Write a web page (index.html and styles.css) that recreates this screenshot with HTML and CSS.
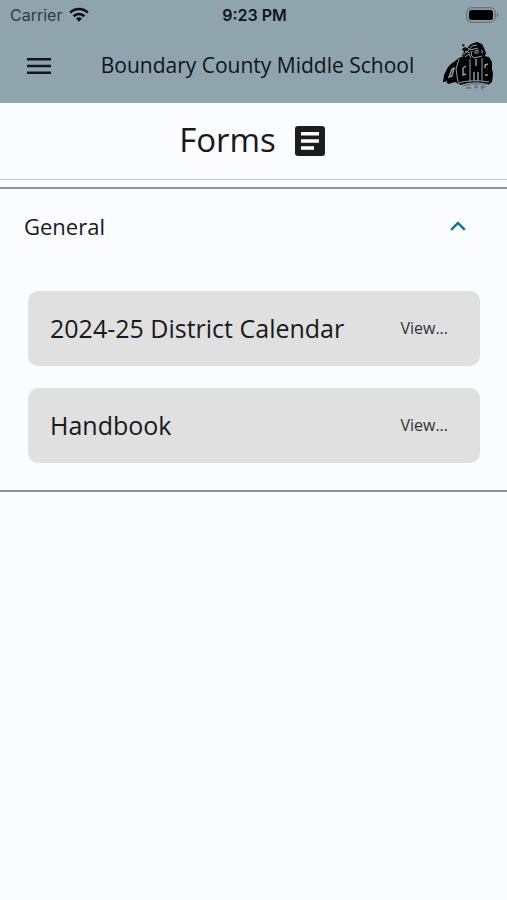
FILE: index.html
```
<!DOCTYPE html>
<html lang="en">
<head>
  <meta charset="UTF-8">
  <meta name="viewport" content="width=device-width, initial-scale=1.0">
  <title>Forms - Boundary County Middle School</title>
  <link rel="stylesheet" href="styles.css">
</head>
<body>
  <header>
    <div class="status-bar">
      <div class="carrier">
        <span>Carrier</span>
        <svg width="20" height="15" viewBox="0 0 20 15" fill="none" stroke="#0b1013" stroke-width="2.7">
          <path d="M1.2 5.6a12.6 12.6 0 0 1 17.6 0" />
          <path d="M4.6 9.2a7.7 7.7 0 0 1 10.8 0" />
          <path d="M10 14.8l-3-3.2a4.3 4.3 0 0 1 6 0z" fill="#0b1013" stroke="none" />
        </svg>
      </div>
      <span class="time">9:23 PM</span>
      <div class="battery">
        <svg width="33" height="16" viewBox="0 0 33 16">
          <rect x="0.8" y="0.8" width="28.4" height="14.4" rx="4.5" fill="none" stroke="#59676f" />
          <rect x="3" y="3" width="24" height="10" rx="2.5" fill="#000" />
          <path d="M31 5.6c1.8.8 1.8 4 0 4.8z" fill="#59676f" />
        </svg>
      </div>
    </div>

    <div class="app-bar">
      <button class="menu" type="button" aria-label="Menu">
        <svg width="26" height="18" viewBox="0 0 26 18" fill="#101619">
          <path d="M1 1h24v2.4H1zM1 7.8h24v2.4H1zM1 14.6h24V17H1z" />
        </svg>
      </button>
      <h1>Boundary County Middle School</h1>
      <svg class="logo" width="52" height="50" viewBox="0 0 52 50" role="img" aria-label="School logo">
        <!-- badger: body, then head and cap -->
        <path d="M2 41l1-7 4-8 3-3 8-6 5-2 5 1 7 2 8-3 5 1 3 5v7l1 5-1 8-4 3-9-1-9-1-9 2-6-3-7 2-2-3-2 1z" fill="#000" />
        <path d="M23 17l-2-3 2-3-2-3 3-2 2 1 4-4 6-2 5 2 2 4 2 5-2 6-6 2-8-1z" fill="#000" />
        <path d="M21 3l3 1-2 2z" fill="#000" />
        <g fill="none" stroke="#90a4ae" stroke-width="1">
          <path d="M22 14l5-4 4-5 5-1M24 10l5 2M26 6l3 3 8-2M24 16l4-3 2 4M31 10l-1 4 3 3 8-2" />
          <path d="M34 10l3-1v3h-3zM40 9l2 2-2 1" />
          <path d="M18 18l-3 10 2 13M29 18v23M41 17v23M17 42q14-4 31-1" />
          <path d="M11 28l-3 8 3-1 2-8zM25 25l-3 2v7l3-1M35 18v7M33 40v-9M37 40v-9M47 23l-3 1v3M44 34h3" stroke-width="1.4" />
        </g>
        <path d="M20 44q12-5 27-1l-2 4q-11-4-20 0z" fill="#90a4ae" />
        <path d="M22 45q10-4 23-1M25 47h6M33 46h4M39 46h6M28 44l-2 4M35 43v5M42 44l-1 5" fill="none" stroke="#52616a" stroke-width=".8" />
      </svg>
    </div>
  </header>

  <main>
    <div class="page-title">
      <h2>Forms</h2>
      <svg width="32" height="32" viewBox="0 0 32 32">
        <rect x="1" y="1" width="30" height="30" rx="3" fill="#1d1d1f" />
        <path d="M7 7h18v3.6H7zM7 14.2h18v3.6H7zM7 21.2h13v3.6H7z" fill="#fff" />
      </svg>
    </div>

    <details class="section" open>
      <summary>
        <span>General</span>
        <svg class="chevron" width="16" height="10" viewBox="0 0 16 10" fill="none" stroke="#14708a" stroke-width="2.4">
          <path d="M1.2 8.8L8 2l6.800 6.800" />
        </svg>
      </summary>
      <div class="forms">
        <a class="form-card" href="#calendar">
          <span class="name">2024-25 District Calendar</span>
          <span class="view">View...</span>
        </a>
        <a class="form-card" href="#handbook">
          <span class="name">Handbook</span>
          <span class="view">View...</span>
        </a>
      </div>
    </details>
  </main>
</body>
</html>
```
FILE: styles.css
```
* { box-sizing: border-box; }
body { margin: 0; font-family: "Open Sans", sans-serif; background: #fbfcff; color: #18191b; }
h1, h2 { margin: 0; font-weight: 400; }
svg { display: block; flex: none; }

header { background: #90a4ae; color: #0d151b; }
.status-bar { display: grid; grid-template-columns: 1fr auto 1fr; align-items: center; height: 29px; padding: 0 8px 0 10px; font-family: Inter, sans-serif; font-size: 16px; }
.carrier { display: flex; align-items: center; gap: 7px; color: #303b42; }
.time { font-weight: 600; }
.battery { display: flex; justify-content: flex-end; }

.app-bar { display: flex; align-items: center; justify-content: space-between; height: 74px; padding: 0 14px 0 18px; }
.menu { padding: 8px; border: 0; background: none; cursor: pointer; }
h1 { padding: 0 0 2px 14px; font-size: 21px; line-height: 32px; white-space: nowrap; }

.page-title { display: flex; align-items: center; justify-content: center; gap: 18px; height: 77px; padding-right: 2px; border-bottom: 1px solid #c4c6ca; }
h2 { font-size: 33px; line-height: 48px; padding-bottom: 2px; }

.section { margin-top: 7px; border-top: 2px solid #929396; border-bottom: 2px solid #929396; }
summary { display: flex; align-items: center; justify-content: space-between; height: 76px; padding: 0 41px 2px 24px; font-size: 22px; line-height: 32px; list-style: none; cursor: pointer; }
summary::-webkit-details-marker { display: none; }
.section:not([open]) .chevron { transform: rotate(180deg); }

.forms { display: flex; flex-direction: column; gap: 22px; padding: 26px 27px 27px 28px; }
.form-card { display: flex; align-items: center; justify-content: space-between; min-height: 75px; padding: 0 32px 2px 22px; border-radius: 10px; background: #e0e0e0; color: #18191b; text-decoration: none; }
.name { font-size: 25px; line-height: 32px; }
.view { font-size: 16px; line-height: 24px; color: #303134; }
```
